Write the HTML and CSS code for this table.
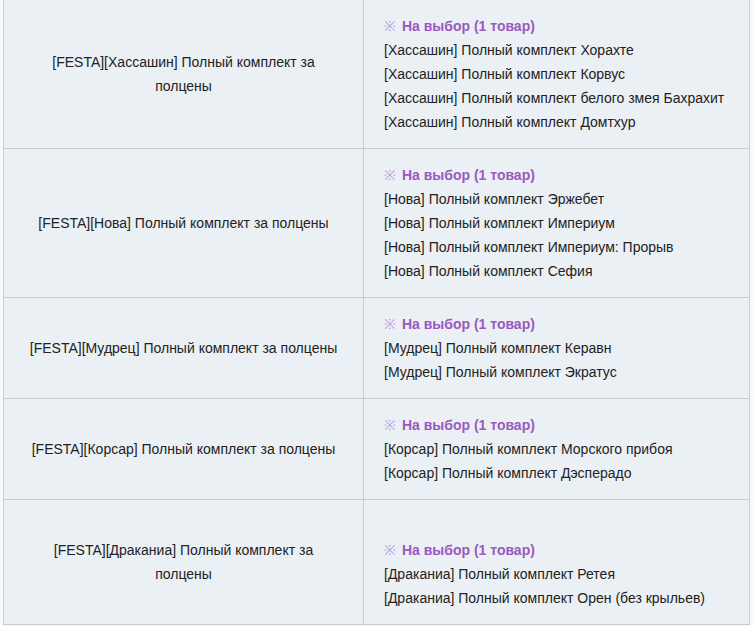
FILE: index.html
```html
<!DOCTYPE html>
<html lang="ru">
<head>
<meta charset="utf-8">
<link rel="stylesheet" href="styles.css">
</head>
<body>
<div class="wrap">
<table class="sets">
  <tr>
    <td class="name">[FESTA][Хассашин] Полный комплект за полцены</td>
    <td class="items">
      <div class="pick"><span class="mark">※</span> На выбор (1 товар)</div>
      <div>[Хассашин] Полный комплект Хорахте</div>
      <div>[Хассашин] Полный комплект Корвус</div>
      <div>[Хассашин] Полный комплект белого змея Бахрахит</div>
      <div>[Хассашин] Полный комплект Домтхур</div>
    </td>
  </tr>
  <tr>
    <td class="name">[FESTA][Нова] Полный комплект за полцены</td>
    <td class="items">
      <div class="pick"><span class="mark">※</span> На выбор (1 товар)</div>
      <div>[Нова] Полный комплект Эржебет</div>
      <div>[Нова] Полный комплект Империум</div>
      <div>[Нова] Полный комплект Империум: Прорыв</div>
      <div>[Нова] Полный комплект Сефия</div>
    </td>
  </tr>
  <tr>
    <td class="name">[FESTA][Мудрец] Полный комплект за полцены</td>
    <td class="items">
      <div class="pick"><span class="mark">※</span> На выбор (1 товар)</div>
      <div>[Мудрец] Полный комплект Керавн</div>
      <div>[Мудрец] Полный комплект Экратус</div>
    </td>
  </tr>
  <tr>
    <td class="name">[FESTA][Корсар] Полный комплект за полцены</td>
    <td class="items">
      <div class="pick"><span class="mark">※</span> На выбор (1 товар)</div>
      <div>[Корсар] Полный комплект Морского прибоя</div>
      <div>[Корсар] Полный комплект Дэсперадо</div>
    </td>
  </tr>
  <tr>
    <td class="name">[FESTA][Драканиа] Полный комплект за полцены</td>
    <td class="items">
      <div>&nbsp;</div>
      <div class="pick"><span class="mark">※</span> На выбор (1 товар)</div>
      <div>[Драканиа] Полный комплект Ретея</div>
      <div>[Драканиа] Полный комплект Орен (без крыльев)</div>
    </td>
  </tr>
</table>
</div>
</body>
</html>
```

FILE: styles.css
```css
html, body {
  margin: 0;
  padding: 0;
  background: #f7f8fa;
}
.wrap {
  padding-left: 3px;
  margin-top: -1px;
}
.sets {
  border-collapse: collapse;
  width: 747px;
  table-layout: fixed;
  font-family: "Liberation Sans", Arial, sans-serif;
  font-size: 14px;
  line-height: 24px;
  color: #222;
  background: #ebf0f5;
}
.sets td {
  border: 1px solid #cacccf;
  padding: 14px 20px;
  vertical-align: middle;
}
.sets td.name {
  width: 319px;
  text-align: center;
}
.sets td.items {
  text-align: left;
}
.pick {
  font-weight: bold;
  color: #9b59c0;
}
.mark {
  color: #c4a0dc;
  font-weight: normal;
  margin-right: 2px;
}
```
